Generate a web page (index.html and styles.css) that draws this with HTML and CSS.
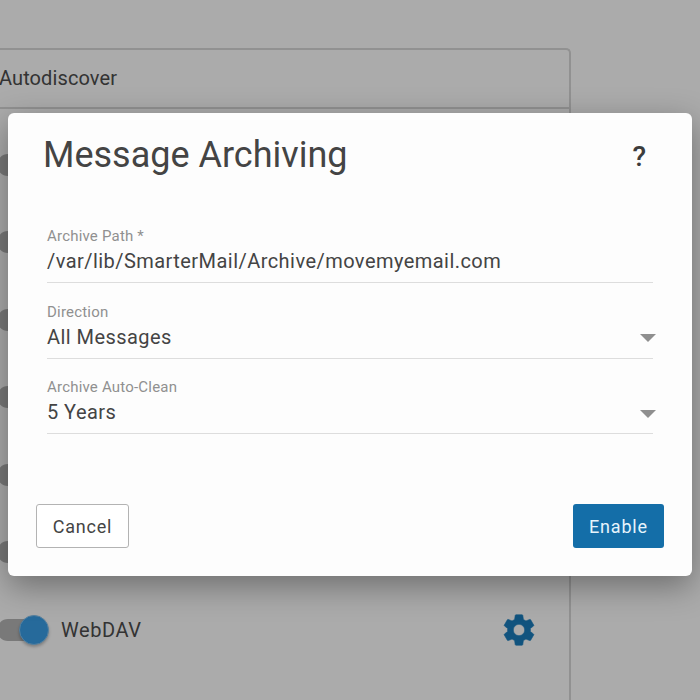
FILE: index.html
```html
<!DOCTYPE html>
<html lang="en">
  <head>
    <meta charset="UTF-8" />
    <meta name="viewport" content="width=device-width, initial-scale=1.0" />
    <title>Message Archiving</title>
    <link rel="stylesheet" href="styles.css">
  </head>
  <body>
    <!-- page behind the dialog -->
    <div class="card">
      <div class="card-header">Autodiscover</div>
      <div class="row"><span class="switch"></span></div>
      <div class="row"><span class="switch"></span></div>
      <div class="row"><span class="switch"></span></div>
      <div class="row"><span class="switch"></span></div>
      <div class="row"><span class="switch"></span></div>
      <div class="row"><span class="switch"></span></div>
      <div class="row">
        <span class="switch on"></span>
        <span class="row-label">WebDAV</span>
        <svg class="gear" viewBox="0 0 24 24">
          <path d="M19.14 12.94c.04-.3.06-.61.06-.94 0-.32-.02-.64-.07-.94l2.03-1.58c.18-.14.23-.41.12-.61l-1.92-3.32c-.12-.22-.37-.29-.59-.22l-2.39.96c-.5-.38-1.03-.7-1.62-.94l-.36-2.54c-.04-.24-.24-.41-.48-.41h-3.84c-.24 0-.43.17-.47.41l-.36 2.54c-.59.24-1.13.57-1.62.94l-2.39-.96c-.22-.08-.47 0-.59.22L2.74 8.87c-.12.21-.08.47.12.61l2.03 1.58c-.05.3-.09.63-.09.94s.02.64.07.94l-2.03 1.58c-.18.14-.23.41-.12.61l1.92 3.32c.12.22.37.29.59.22l2.39-.96c.5.38 1.03.7 1.62.94l.36 2.54c.05.24.24.41.48.41h3.84c.24 0 .44-.17.47-.41l.36-2.54c.59-.24 1.13-.56 1.62-.94l2.39.96c.22.08.47 0 .59-.22l1.92-3.32c.12-.22.07-.47-.12-.61l-2.01-1.58zM12 15.6c-1.98 0-3.6-1.62-3.6-3.6s1.62-3.6 3.6-3.6 3.6 1.62 3.6 3.6-1.62 3.6-3.6 3.6z"/>
        </svg>
      </div>
    </div>

    <div class="backdrop"></div>

    <div class="dialog">
      <div class="dialog-head">
        <h1 class="dialog-title">Message Archiving</h1>
        <span class="help">?</span>
      </div>
      <div class="fields">
        <div class="field">
          <div class="field-label">Archive Path *</div>
          <div class="field-value">/var/lib/SmarterMail/Archive/movemyemail.com</div>
        </div>
        <div class="field">
          <div class="field-label">Direction</div>
          <div class="field-value">All Messages<span class="caret"></span></div>
        </div>
        <div class="field">
          <div class="field-label">Archive Auto-Clean</div>
          <div class="field-value">5 Years<span class="caret"></span></div>
        </div>
      </div>
      <div class="actions">
        <button class="btn btn-cancel">Cancel</button>
        <button class="btn btn-enable">Enable</button>
      </div>
    </div>
  </body>
</html>
```

FILE: styles.css
```css
html,
body {
  margin: 0;
  height: 700px;
  overflow: hidden;
}

body {
  font-family: Roboto, "Liberation Sans", sans-serif;
  background: #fff;
  color: #4d4d4d;
}

.card {
  box-sizing: border-box;
  width: 592px;
  height: 652px;
  margin: 48px 0 0 -21px;
  border: solid 2px #d9d9d9;
  border-bottom: none;
  border-radius: 5px 5px 0 0;
}

.card-header {
  height: 57px;
  line-height: 57px;
  margin-bottom: 17px;
  padding-left: 18px;
  font-size: 20px;
  letter-spacing: 0.1px;
  border-bottom: solid 2px #d9d9d9;
}

.row {
  display: flex;
  align-items: center;
  height: 77.5px;
  padding-left: 16px;
}

.switch {
  display: block;
  position: relative;
  width: 50px;
  height: 22px;
  border-radius: 11px;
  background: #b5b5b5;
}

.switch.on::after {
  content: "";
  position: absolute;
  left: 22px;
  top: -4px;
  box-sizing: border-box;
  width: 30px;
  height: 30px;
  border-radius: 50%;
  background: #3a9fe8;
  border: solid 1px #7fc0ee;
  box-shadow: 0 2px 3px rgba(0, 0, 0, 0.25);
}

.row-label {
  margin-left: 14px;
  font-size: 20px;
  letter-spacing: 0.55px;
}

.gear {
  width: 38px;
  height: 38px;
  margin-left: 359px;
  fill: #1a7dbd;
  stroke: #1a7dbd;
  stroke-width: 0.4;
}

.backdrop {
  position: absolute;
  inset: 0;
  background: rgba(0, 0, 0, 0.33);
}

.dialog {
  position: absolute;
  left: 8px;
  top: 113px;
  box-sizing: border-box;
  display: flex;
  flex-direction: column;
  width: 684px;
  height: 463px;
  padding: 0 28px 28px;
  background: #fdfdfd;
  border-radius: 6px;
  box-shadow: 0 10px 32px rgba(0, 0, 0, 0.36);
}

.dialog-head {
  display: flex;
  justify-content: space-between;
  align-items: center;
  height: 84px;
  padding: 0 18px 0 7px;
}

.dialog-title {
  margin: 0;
  font-size: 36px;
  font-weight: 400;
  color: #444;
}

.help {
  position: relative;
  top: 1px;
  font-size: 28px;
  font-weight: 500;
  color: #3c3c3c;
}

.fields {
  flex: 1;
  padding: 30px 11px 0;
}

.field {
  height: 75.5px;
}

.field-label {
  font-size: 15px;
  line-height: 18px;
  letter-spacing: 0.2px;
  color: #909090;
}

.field-value {
  position: relative;
  height: 37px;
  line-height: 32px;
  font-size: 20px;
  letter-spacing: 0.45px;
  color: #444;
  border-bottom: solid 1px #ddd;
}

.caret {
  position: absolute;
  right: -3px;
  top: 13.5px;
  border-left: 8px solid transparent;
  border-right: 8px solid transparent;
  border-top: 8px solid #8f8f8f;
}

.actions {
  display: flex;
  justify-content: space-between;
}

.btn {
  width: 93px;
  height: 44px;
  font-family: inherit;
  font-size: 18px;
  letter-spacing: 0.8px;
  border-radius: 3px;
}

.btn-cancel {
  background: #fff;
  color: #444;
  border: solid 1px #b3b3b3;
}

.btn-enable {
  width: 91px;
  background: #146ea8;
  color: #e6f4fc;
  border: none;
}
```
